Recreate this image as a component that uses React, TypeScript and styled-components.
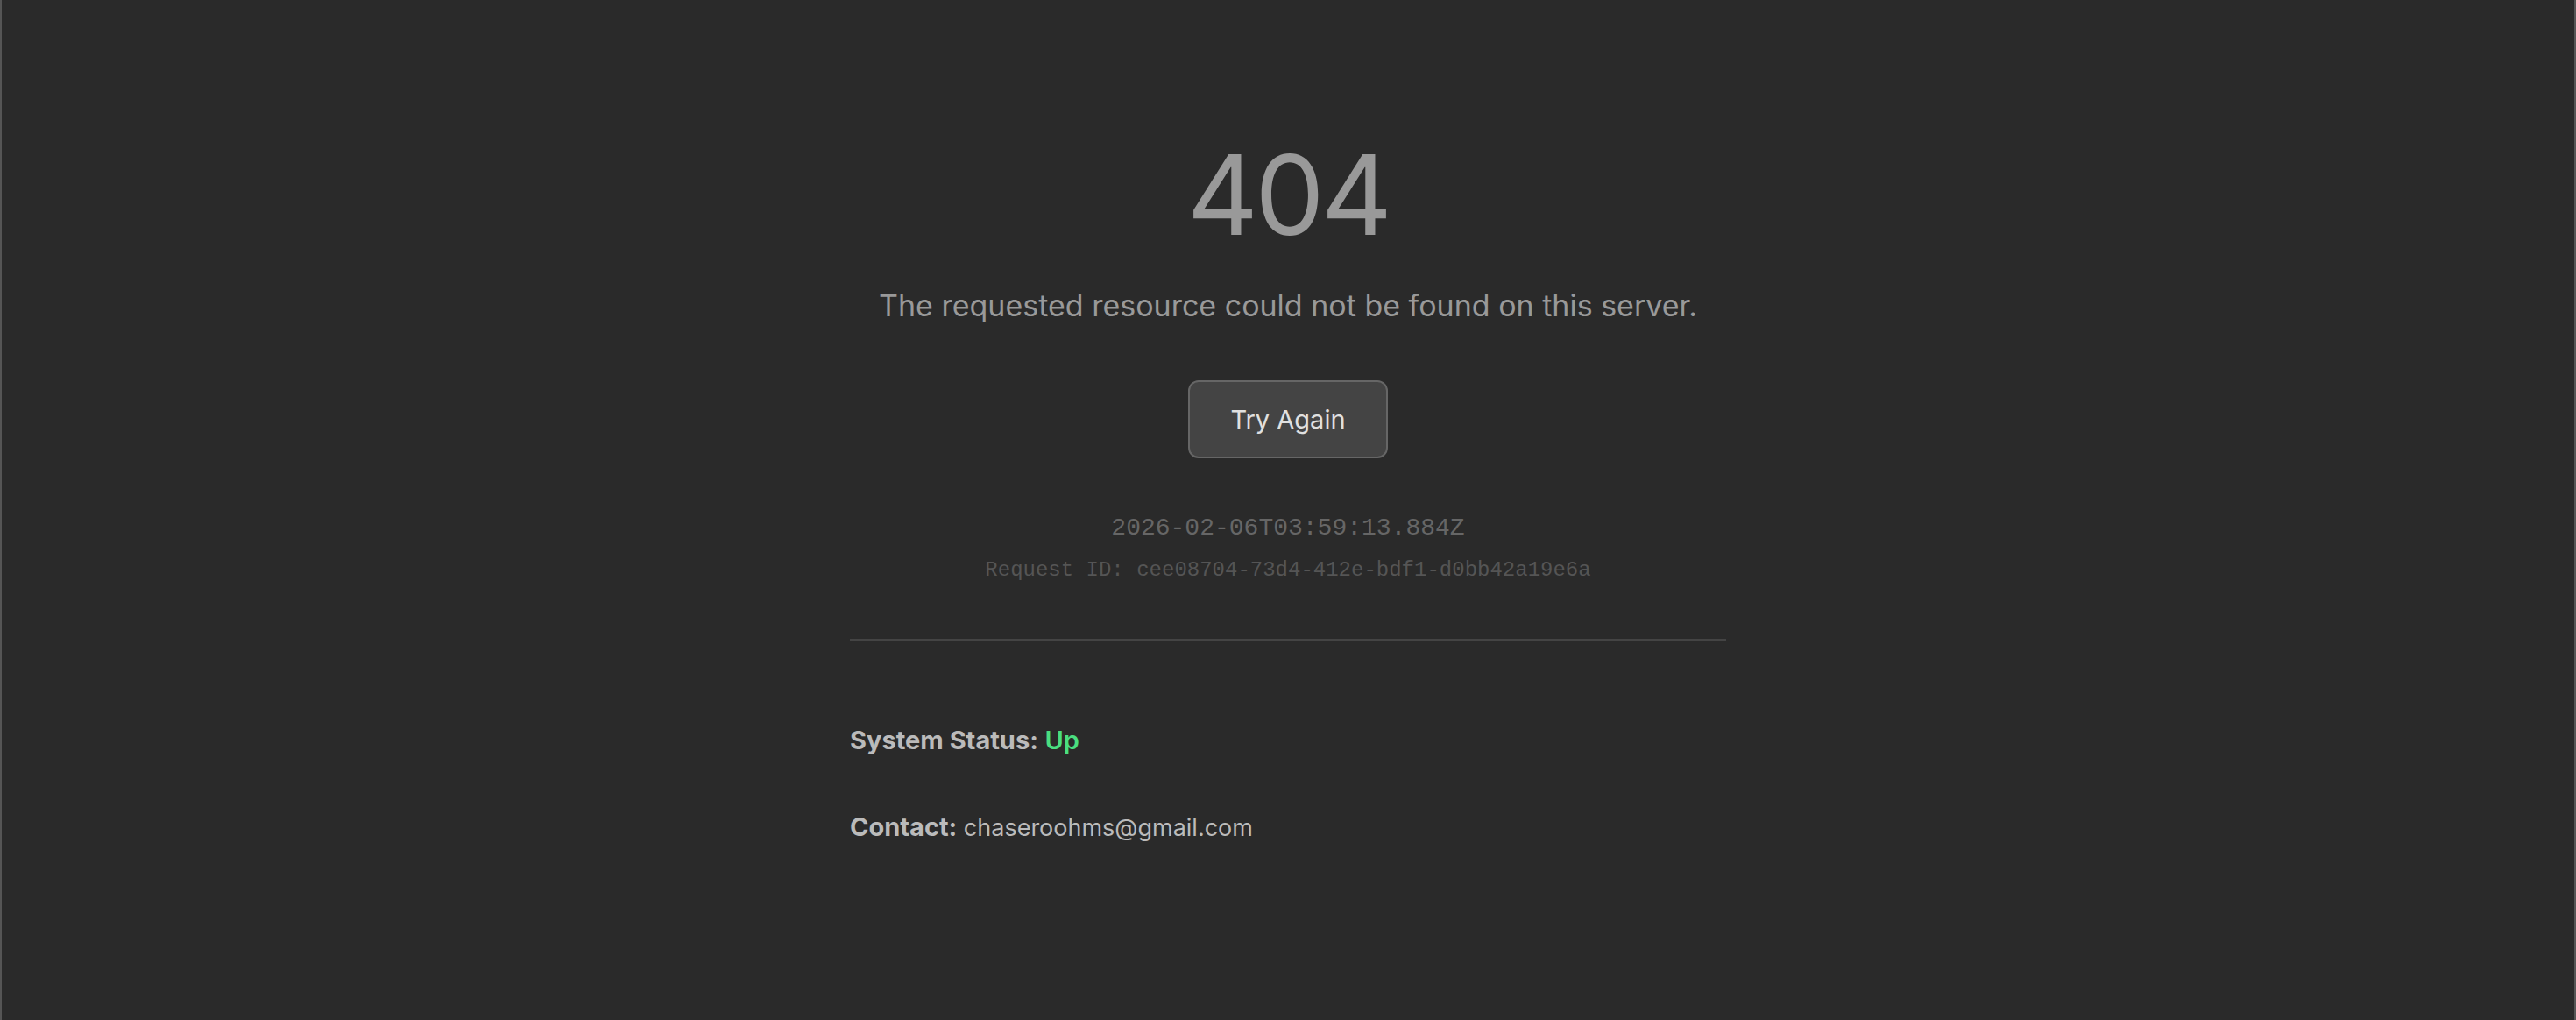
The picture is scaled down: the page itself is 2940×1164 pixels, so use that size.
import React from "react";
import styled, { createGlobalStyle } from "styled-components";

const GlobalStyle = createGlobalStyle`
  *, *::before, *::after { box-sizing: border-box; }
  body {
    margin: 0;
    background: #2a2a2a;
    color: #bbb;
    font-family: Inter, "Liberation Sans", sans-serif;
  }
`;

const Page = styled.div`
  min-height: 100vh;
  display: flex;
  flex-direction: column;
  align-items: center;
  justify-content: center;
  padding: 40px;
  border: solid #555;
  border-width: 0 2px;
`;

const Content = styled.main`
  width: 100%;
  max-width: 1000px;
  display: flex;
  flex-direction: column;
  align-items: center;
`;

const Code = styled.h1`
  margin: 0 0 37px;
  font-size: 126px;
  line-height: 128px;
  font-weight: 400;
  letter-spacing: -4px;
  color: #999;
`;

const Message = styled.p`
  margin: 0 0 59px;
  font-size: 34px;
  line-height: 52px;
  color: #999;
  text-align: center;
`;

const RetryButton = styled.button`
  margin-bottom: 60px;
  padding: 20px 46px;
  border: 2px solid #666;
  border-radius: 12px;
  background: #444;
  color: #e0e0e0;
  font-family: inherit;
  font-size: 29px;
  line-height: 45px;
  cursor: pointer;
`;

const Mono = styled.p<{ $small?: boolean }>`
  margin: 0 0 ${(p) => (p.$small ? 58 : 8)}px;
  font-family: "Liberation Mono", "Courier New", monospace;
  font-size: ${(p) => (p.$small ? 24 : 28)}px;
  line-height: 40px;
  color: ${(p) => (p.$small ? "#555" : "#666")};
`;

const Details = styled.section`
  width: 100%;
  display: flex;
  flex-direction: column;
  gap: 50px;
  padding: 90px 0 38px;
  border-top: 2px solid #444;
`;

const Detail = styled.p`
  margin: 0;
  font-size: 27px;
  line-height: 48px;
`;

const Label = styled.strong`
  font-size: 29px;
  font-weight: 700;
`;

const Status = styled.span`
  font-size: 29px;
  font-weight: 600;
  color: #4ade80;
`;

export default function App() {
  return (
    <>
      <GlobalStyle />
      <Page>
        <Content>
          <Code>404</Code>
          <Message>The requested resource could not be found on this server.</Message>
          <RetryButton type="button">Try Again</RetryButton>
          <Mono>2026-02-06T03:59:13.884Z</Mono>
          <Mono $small>Request ID: cee08704-73d4-412e-bdf1-d0bb42a19e6a</Mono>
          <Details>
            <Detail>
              <Label>System Status:</Label> <Status>Up</Status>
            </Detail>
            <Detail>
              <Label>Contact:</Label> chaseroohms@gmail.com
            </Detail>
          </Details>
        </Content>
      </Page>
    </>
  );
}
